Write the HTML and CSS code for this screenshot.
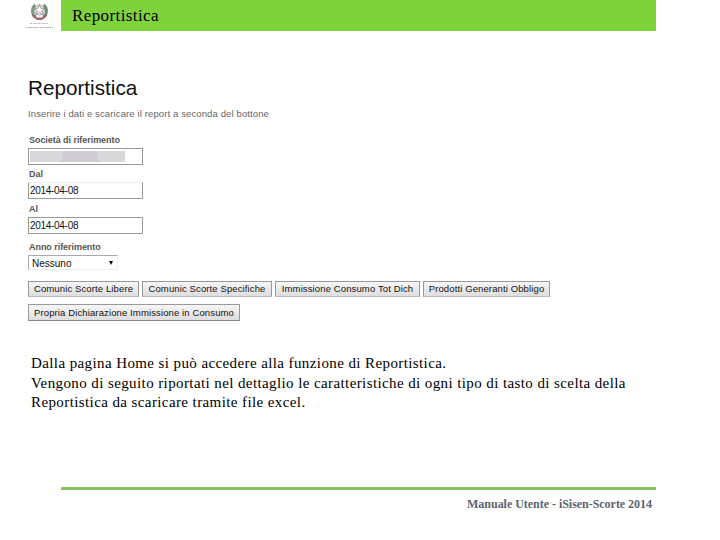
FILE: index.html
```
<!DOCTYPE html>
<html lang="it">
<head>
    <meta charset="UTF-8">
    <meta name="viewport" content="width=device-width, initial-scale=1.0">
    <title>Manuale Utente - iSisen-Scorte 2014</title>
    <link rel="stylesheet" href="styles.css">
</head>
<body>

<header>
    <div class="logo">
        <svg width="28" height="31" viewBox="0 0 28 31">
            <path d="M9.500 5C5 8 6 15 10 17" fill="none" stroke="#7d9a86" stroke-width="3"/>
            <path d="M17.500 5C22 8 21 15 17 17" fill="none" stroke="#758c78" stroke-width="3"/>
            <circle cx="13.500" cy="10" r="5" fill="#eef0ee" stroke="#a5aaa5"/>
            <path d="M13.500 4.500l1.400 3.800h4l-3.200 2.400 1.200 3.900-3.400-2.400-3.400 2.400 1.200-3.900-3.200-2.400h4z" fill="#fff" stroke="#8f8585" stroke-width=".8"/>
            <path d="M6.500 15l4 3.500h6l4-3.500" fill="none" stroke="#a85d60" stroke-width="2.200"/>
            <path d="M11 19h5" stroke="#8c6f6a" stroke-width="2"/>
            <path d="M4 23.500h18" stroke="#bbb" stroke-dasharray="2 .7 1 .5"/>
            <path d="M0 27.500h27" stroke="#b5aeae" stroke-dasharray="1.500 .8 3 .6"/>
        </svg>
    </div>
    <div class="title-bar">Reportistica</div>
</header>

<form class="report">
    <h1>Reportistica</h1>
    <p class="hint">Inserire i dati e scaricare il report a seconda del bottone</p>

    <label for="societa">Società di riferimento</label>
    <div class="field" id="societa"><span class="masked"></span></div>

    <label for="dal">Dal</label>
    <input class="field open-top" type="text" id="dal" value="2014-04-08">

    <label for="al">Al</label>
    <input class="field" type="text" id="al" value="2014-04-08">

    <label class="year-label" for="anno">Anno riferimento</label>
    <div class="select" id="anno"><span>Nessuno</span><span class="arrow"></span></div>

    <div class="buttons">
        <button type="button" class="b1">Comunic Scorte Libere</button>
        <button type="button" class="b2">Comunic Scorte Specifiche</button>
        <button type="button" class="b3">Immissione Consumo Tot Dich</button>
        <button type="button" class="b4">Prodotti Generanti Obbligo</button>
        <button type="button" class="b5">Propria Dichiarazione Immissione in Consumo</button>
    </div>
</form>

<div class="description">
    <p>Dalla pagina Home si può accedere alla funzione di Reportistica.</p>
    <p>Vengono di seguito riportati nel dettaglio le caratteristiche di ogni tipo di tasto di scelta della</p>
    <p>Reportistica da scaricare tramite file excel.</p>
</div>

<footer>Manuale Utente - iSisen-Scorte 2014</footer>

</body>
</html>
```
FILE: styles.css
```
* {
    box-sizing: border-box;
}
body {
    width: 720px;
    height: 540px;
    margin: 0;
    overflow: hidden;
    display: flex;
    flex-direction: column;
    background-color: #fff;
    font-family: "Liberation Serif", serif;
    color: #000;
}
h1, p {
    margin: 0;
    white-space: nowrap;
}
header {
    display: flex;
    height: 31px;
}
.logo {
    width: 61px;
    padding-left: 26px;
}
.logo svg {
    display: block;
}
.title-bar {
    width: 595px;
    padding-left: 11px;
    background-color: #7fd23c;
    font-size: 17px;
    line-height: 31px;
    letter-spacing: 0.4px;
}
.report {
    height: 322px;
    padding: 44px 0 0 28px;
    font-family: "Liberation Sans", Arial, sans-serif;
    font-size: 10px;
}
h1 {
    height: 26px;
    font-size: 20.7px;
    font-weight: normal;
    line-height: 26px;
    color: #111;
}
.hint {
    height: 32px;
    padding-top: 6px;
    font-size: 9.5px;
    line-height: 14px;
    letter-spacing: 0.12px;
    color: #666;
}
label {
    display: block;
    height: 15px;
    padding-left: 1px;
    font-size: 9px;
    font-weight: bold;
    line-height: 15px;
    letter-spacing: -0.05px;
    color: #555;
}
.field {
    display: block;
    width: 115px;
    height: 17px;
    margin: 0 0 2px;
    padding: 0 1px;
    border: 1px solid #999;
    background-color: #fff;
    font-family: inherit;
    font-size: 10px;
    letter-spacing: -0.3px;
    color: #111;
}
.open-top {
    margin-bottom: 3px;
    border-top-color: #eee;
}
.masked {
    display: block;
    width: 95px;
    height: 11px;
    margin-top: 2px;
    background: linear-gradient(90deg, #d8d8da 34%, #cfccd3 34%, #cfccd3 72%, #d8d8da 72%);
}
.year-label {
    margin-top: 6px;
}
.select {
    display: flex;
    align-items: center;
    justify-content: space-between;
    width: 90px;
    height: 15px;
    padding: 1px 4px 0 3px;
    border: 1px solid #aaa;
    border-right-color: #eee;
    border-bottom-color: #eee;
    color: #111;
}
.arrow {
    border: 2px solid transparent;
    border-top: 4px solid #000;
    border-bottom: 0;
}
.buttons {
    display: flex;
    flex-wrap: wrap;
    gap: 7px 3px;
    margin-top: 11px;
}
button {
    height: 16px;
    padding: 0;
    border: 1px solid #999;
    border-bottom-color: #bbb;
    background: linear-gradient(#f6f6f6, #dedede);
    font-family: inherit;
    font-size: 9.5px;
    line-height: 14px;
    letter-spacing: 0.12px;
    white-space: nowrap;
    color: #111;
}
.b1 {
    width: 111px;
}
.b2 {
    width: 130px;
}
.b3 {
    width: 145px;
}
.b4 {
    width: 127px;
}
.b5 {
    width: 212px;
    height: 17px;
    border-bottom-color: #888;
}
.description {
    height: 134px;
    padding: 1px 0 0 31px;
    font-size: 15px;
    line-height: 19.5px;
    letter-spacing: 0.4px;
}
footer {
    width: 595px;
    margin-left: 61px;
    padding: 5px 4px 0 0;
    border-top: 3px solid #86c55a;
    font-size: 12px;
    font-weight: bold;
    line-height: 18px;
    letter-spacing: -0.03px;
    text-align: right;
    color: #5c6470;
}
```
